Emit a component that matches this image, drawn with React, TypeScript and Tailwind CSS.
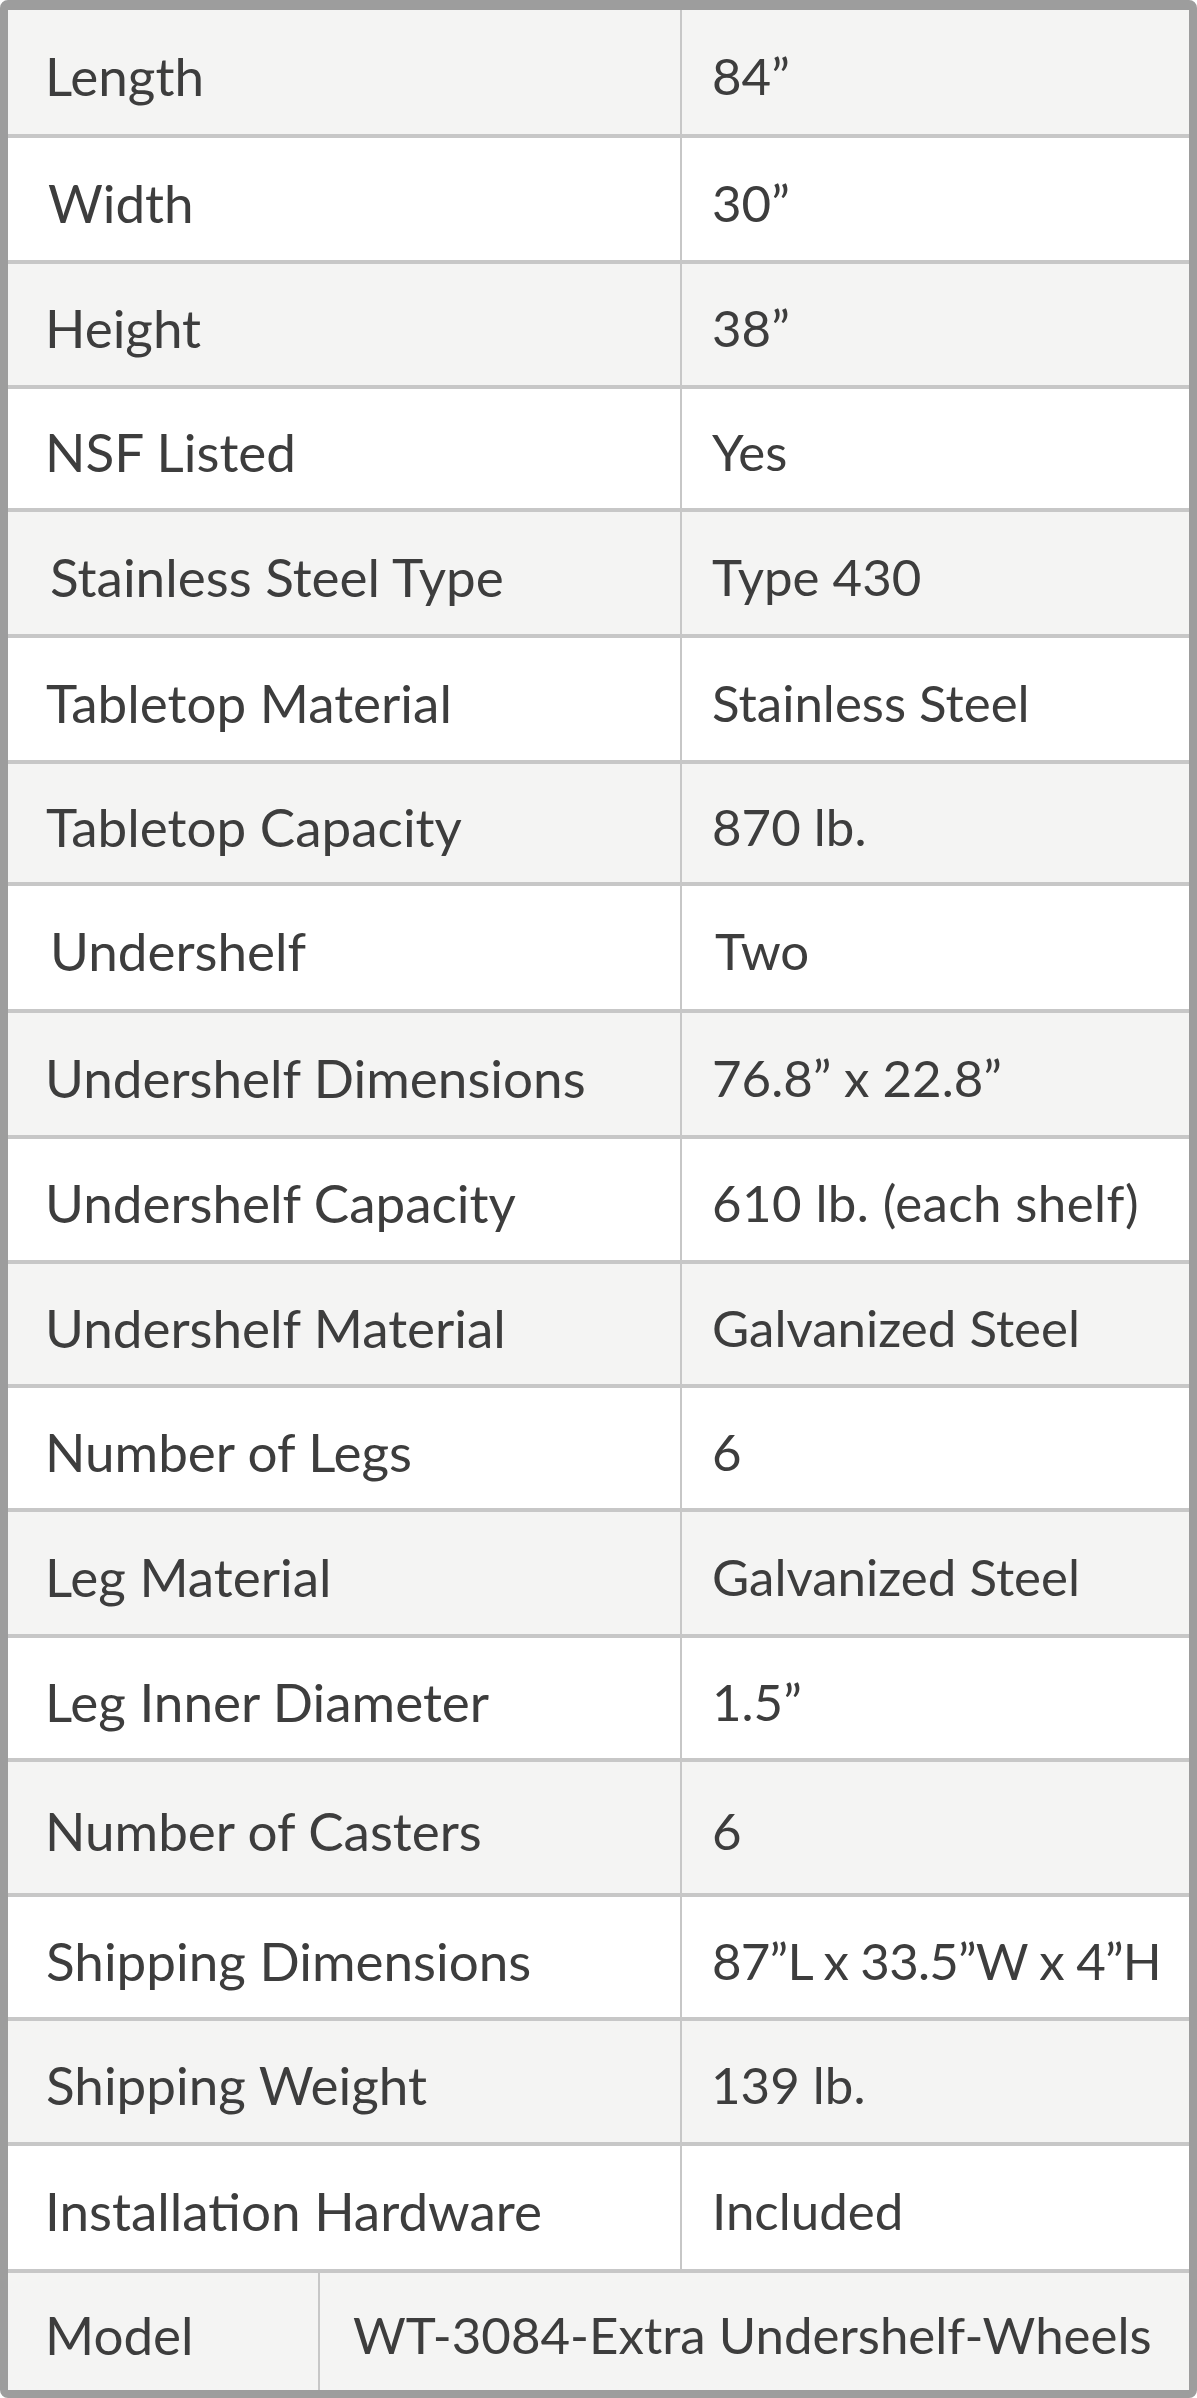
import React from "react";

type Row = { k: string; v: string; h: string; pl: string; vpl: string; vt?: string };

const rows: Row[] = [
  { k: "Length", v: "84”", h: "h-[124px]", pl: "pl-[37px]", vpl: "pl-[30px]" },
  { k: "Width", v: "30”", h: "h-[126px]", pl: "pl-[40px]", vpl: "pl-[30px]" },
  { k: "Height", v: "38”", h: "h-[125px]", pl: "pl-[37px]", vpl: "pl-[30px]" },
  { k: "NSF Listed", v: "Yes", h: "h-[123px]", pl: "pl-[37px]", vpl: "pl-[30px]" },
  { k: "Stainless Steel Type", v: "Type 430", h: "h-[126px]", pl: "pl-[42px]", vpl: "pl-[30px]" },
  { k: "Tabletop Material", v: "Stainless Steel", h: "h-[126px]", pl: "pl-[38px]", vpl: "pl-[30px]" },
  { k: "Tabletop Capacity", v: "870 lb.", h: "h-[122px]", pl: "pl-[38px]", vpl: "pl-[30px]" },
  { k: "Undershelf", v: "Two", h: "h-[127px]", pl: "pl-[42px]", vpl: "pl-[33px]" },
  { k: "Undershelf Dimensions", v: "76.8” x 22.8”", h: "h-[126px]", pl: "pl-[37px]", vpl: "pl-[30px]" },
  { k: "Undershelf Capacity", v: "610 lb. (each shelf)", h: "h-[125px]", pl: "pl-[37px]", vpl: "pl-[30px]", vt: "tracking-[0.4px]" },
  { k: "Undershelf Material", v: "Galvanized Steel", h: "h-[124px]", pl: "pl-[37px]", vpl: "pl-[30px]" },
  { k: "Number of Legs", v: "6", h: "h-[124px]", pl: "pl-[37px]", vpl: "pl-[30px]" },
  { k: "Leg Material", v: "Galvanized Steel", h: "h-[126px]", pl: "pl-[37px]", vpl: "pl-[30px]" },
  { k: "Leg Inner Diameter", v: "1.5”", h: "h-[124px]", pl: "pl-[37px]", vpl: "pl-[30px]" },
  { k: "Number of Casters", v: "6", h: "h-[135px]", pl: "pl-[37px]", vpl: "pl-[30px]" },
  { k: "Shipping Dimensions", v: "87”L x 33.5”W x 4”H", h: "h-[124px]", pl: "pl-[38px]", vpl: "pl-[30px]", vt: "tracking-[-0.8px]" },
  { k: "Shipping Weight", v: "139 lb.", h: "h-[125px]", pl: "pl-[38px]", vpl: "pl-[29px]" },
  { k: "Installation Hardware", v: "Included", h: "h-[127px]", pl: "pl-[37px]", vpl: "pl-[30px]" },
];

export default function App() {
  return (
    <div className="w-[1197px] h-[2398px] bg-white border-[#9d9d9d] border-t-[10px] border-l-[8px] border-r-[8px] border-b-[8px] rounded-[8px] overflow-hidden flex flex-col text-[#3d3d3d] leading-none font-[Lato,'Open_Sans',sans-serif]">
      {rows.map((r, i) => (
        <div
          key={r.k}
          className={[
            "flex shrink-0",
            r.h,
            i % 2 === 0 ? "bg-[#f4f4f3]" : "bg-white",
            i > 0 ? "border-t-4 border-[#c7c7c7]" : "",
          ].join(" ")}
        >
          <div className={["w-[674px] shrink-0 flex items-center border-r-2 border-[#c7c7c7] pt-[6px] whitespace-nowrap text-[53px]", r.pl].join(" ")}>
            {r.k}
          </div>
          <div className={["flex-1 flex items-center pt-[6px] whitespace-nowrap text-[51px]", r.vpl, r.vt ?? ""].join(" ")}>
            {r.v}
          </div>
        </div>
      ))}
      <div className="bg-[#f4f4f3] border-t-4 border-[#c7c7c7] flex flex-1">
        <div className="w-[312px] shrink-0 flex items-center border-r-2 border-[#c7c7c7] pl-[37px] pt-[6px] text-[53px]">
          Model
        </div>
        <div className="flex-1 flex items-center pl-[33px] pt-[6px] whitespace-nowrap text-[51px]">
          WT-3084-Extra Undershelf-Wheels
        </div>
      </div>
    </div>
  );
}
